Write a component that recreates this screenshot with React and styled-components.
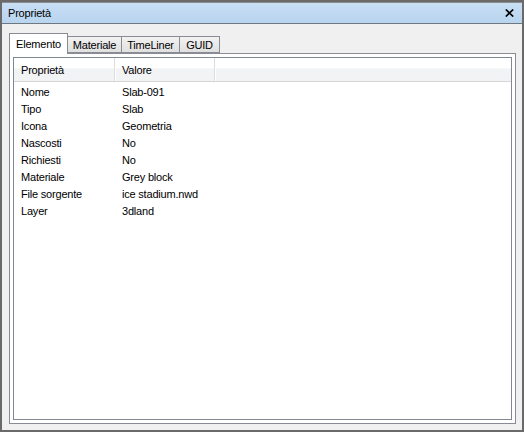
import React from "react";
import styled, { createGlobalStyle } from "styled-components";

const GlobalStyle = createGlobalStyle`
  html, body {
    margin: 0;
    padding: 0;
    background: #f0f0f0;
  }
  body {
    font-family: "Liberation Sans", Arial, sans-serif;
    font-size: 11px;
    letter-spacing: -0.2px;
    color: #000;
  }
`;

const tabs = ["Elemento", "Materiale", "TimeLiner", "GUID"];

const rows = [
  ["Nome", "Slab-091"],
  ["Tipo", "Slab"],
  ["Icona", "Geometria"],
  ["Nascosti", "No"],
  ["Richiesti", "No"],
  ["Materiale", "Grey block"],
  ["File sorgente", "ice stadium.nwd"],
  ["Layer", "3dland"],
];

function App() {
  return (
    <>
      <GlobalStyle />
      <Window>
        <TitleBar>
          <Title>Proprietà</Title>
          <Close>
            <svg width="9" height="8" viewBox="0 0 9 8">
              <path d="M0.8 0.5 L8.2 7.5 M8.2 0.5 L0.8 7.5" stroke="#000" strokeWidth="1.7" />
            </svg>
          </Close>
        </TitleBar>
        <Body>
          <TabRow>
            {tabs.map((t, i) => (
              <Tab key={t} $active={i === 0} $w={[59, 55, 59, 41][i]}>
                {t}
              </Tab>
            ))}
          </TabRow>
          <Panel>
            <ListView>
              <Header>
                <HeadCell $w={101}>Proprietà</HeadCell>
                <HeadCell $w={100}>Valore</HeadCell>
                <HeadFiller />
              </Header>
              <Rows>
                {rows.map(([k, v]) => (
                  <Row key={k}>
                    <Cell $w={101}>{k}</Cell>
                    <Cell $w={100}>{v}</Cell>
                  </Row>
                ))}
              </Rows>
            </ListView>
          </Panel>
        </Body>
      </Window>
    </>
  );
}

export default App;

const Window = styled.div`
  width: 524px;
  height: 432px;
  box-sizing: border-box;
  border: 2px solid #6a6a6a;
  display: flex;
  flex-direction: column;
  background: #f0f0f0;
`;

const TitleBar = styled.div`
  height: 22px;
  box-sizing: border-box;
  border-top: 1px solid #8c8c8c;
  border-bottom: 1px solid #6f7780;
  background: linear-gradient(#c8dff4, #b8d4ef);
  display: flex;
  align-items: center;
  justify-content: space-between;
  padding: 0 8px 0 6px;
  flex-shrink: 0;
`;

const Title = styled.span`
  font-size: 11px;
  color: #000;
`;

const Close = styled.span`
  display: flex;
  align-items: center;
`;

const Body = styled.div`
  flex: 1;
  display: flex;
  flex-direction: column;
  padding: 9px 6px 6px 7px;
  min-height: 0;
`;

const TabRow = styled.div`
  height: 20px;
  display: flex;
  align-items: flex-end;
  position: relative;
  z-index: 1;
  flex-shrink: 0;
`;

const Tab = styled.div`
  box-sizing: border-box;
  width: ${(p) => p.$w}px;
  height: ${(p) => (p.$active ? 21 : 17)}px;
  margin-bottom: ${(p) => (p.$active ? -1 : 0)}px;
  margin-left: -1px;
  &:first-child {
    margin-left: 0;
  }
  border: 1px solid #898c95;
  border-bottom: ${(p) => (p.$active ? "none" : "1px solid #898c95")};
  background: ${(p) => (p.$active ? "#fff" : "linear-gradient(#f2f2f2, #e0e0e0)")};
  display: flex;
  align-items: center;
  justify-content: center;
  padding-top: ${(p) => (p.$active ? 0 : 1)}px;
  font-size: 11px;
`;

const Panel = styled.div`
  flex: 1;
  box-sizing: border-box;
  border: 1px solid #898c95;
  background: #fff;
  padding: 3px;
  display: flex;
  min-height: 0;
`;

const ListView = styled.div`
  flex: 1;
  border: 1px solid #828790;
  background: #fff;
  display: flex;
  flex-direction: column;
`;

const Header = styled.div`
  height: 23px;
  display: flex;
  border-bottom: 1px solid #d5d5d5;
  background: linear-gradient(#fff 0%, #fff 45%, #f2f3f5 46%, #f2f3f5 100%);
`;

const HeadCell = styled.div`
  width: ${(p) => p.$w}px;
  box-sizing: border-box;
  padding-left: 7px;
  display: flex;
  align-items: center;
  border-right: 1px solid #dcdcdc;
  box-shadow: 1px 0 0 #fff;
`;

const HeadFiller = styled.div`
  flex: 1;
  margin-right: 2px;
`;

const Rows = styled.div`
  padding-top: 1px;
`;

const Row = styled.div`
  height: 17px;
  display: flex;
  align-items: center;
`;

const Cell = styled.div`
  width: ${(p) => p.$w}px;
  box-sizing: border-box;
  padding-left: 7px;
  white-space: nowrap;
`;
